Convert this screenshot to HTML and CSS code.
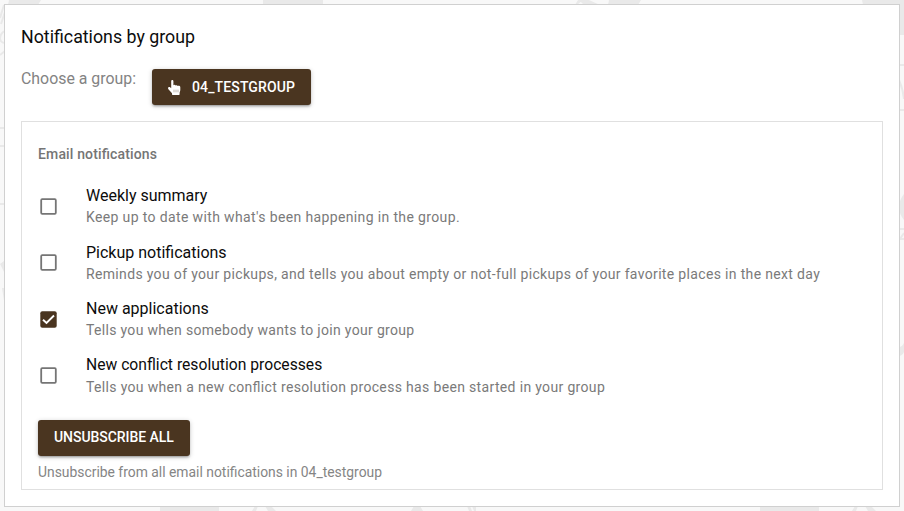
FILE: index.html
```html
<!DOCTYPE html>
<html lang="en">
<head>
<meta charset="utf-8">
<title>Notifications</title>
<link rel="stylesheet" href="styles.css">
</head>
<body>
<svg class="backdrop" width="904" height="511" viewBox="0 0 904 511" aria-hidden="true">
  <g fill="#e9e9e9">
    <path d="M9 0H41L38 5H8ZM263 0H323V5H263ZM578 0H583L577 5H575ZM609 0H641L638 5H608ZM862 0H904V35H899V5H863ZM579 0H589L600 5H584Z"/>
    <path d="M160 506H219V511H160ZM760 506H819V511H760ZM252 511L255 506H258L256 511ZM265 506H271L276 511H268ZM411 511L414 506H420L423 511ZM467 506H470L472 511H469ZM472 506H476V511H474ZM852 511L855 506H858L856 511ZM865 506H871L876 511H868Z"/>
    <path d="M904 194Q899 200 899 207Q899 214 904 220ZM904 343Q902 347 899 347V356Q903 355 904 352ZM0 264L4 261V272ZM2 288H5V307Z"/>
  </g>
  <g fill="none" stroke="#e9e9e9" stroke-width="2">
    <path d="M899 65H904M899 80Q903 89 904 99M899 110H904M899 229H904M904 233L900 239H904M0 128H5M0 146H5M0 204H5M0 18L4 5M1 24L5 12M5 31Q0 33 0 39Q1 43 5 43M0 55L5 51"/>
  </g>
</svg>
<main class="card">
  <h1 class="title">Notifications by group</h1>
  <div class="chooser">
    <span class="chooser-label">Choose a group:</span>
    <button class="btn btn-group">
      <svg class="hand" width="14" height="15" viewBox="0 0 14 14" preserveAspectRatio="none" aria-hidden="true"><path fill="#fff" d="M3.2 1.1C3.2-.3 5.4-.3 5.4 1.1V5C5.8 4.2 7.2 4.3 7.6 5.2C8.2 4.6 9.4 4.8 9.8 5.7C10.5 5.2 12.3 5.5 12.3 6.8V9.2C12.3 10.4 11.6 11.2 11.6 12.4V13.4Q11.6 14 11 14H4.6Q4 14 4 13.4V12.3L.4 8.6C-.6 7.4 .8 6 2.1 6.8L3.2 7.6Z"/><path d="M6 9V11.5M8 9V11.5M10 9V11.5" stroke="#4a3520" stroke-width=".35"/></svg>
      <span>04_TESTGROUP</span>
    </button>
  </div>
  <section class="panel">
    <h2 class="panel-title">Email notifications</h2>
    <ul class="options">
      <li class="option"><svg class="check" viewBox="0 0 17 17" aria-hidden="true"><rect class="box" x="1.2" y="1.2" width="14.6" height="14.6" rx="1"/></svg><div><div class="name">Weekly summary</div><div class="caption caption-wide">Keep up to date with what's been happening in the group.</div></div></li>
      <li class="option"><svg class="check" viewBox="0 0 17 17" aria-hidden="true"><rect class="box" x="1.2" y="1.2" width="14.6" height="14.6" rx="1"/></svg><div><div class="name">Pickup notifications</div><div class="caption">Reminds you of your pickups, and tells you about empty or not-full pickups of your favorite places in the next day</div></div></li>
      <li class="option"><svg class="check" viewBox="0 0 17 17" aria-hidden="true"><rect class="box-on" x=".3" y=".3" width="16.4" height="16.4" rx="2"/><path class="tick" d="M3 8.7L6.5 12L14 4.5"/></svg><div><div class="name">New applications</div><div class="caption caption-narrow">Tells you when somebody wants to join your group</div></div></li>
      <li class="option"><svg class="check" viewBox="0 0 17 17" aria-hidden="true"><rect class="box" x="1.2" y="1.2" width="14.6" height="14.6" rx="1"/></svg><div><div class="name name-long">New conflict resolution processes</div><div class="caption">Tells you when a new conflict resolution process has been started in your group</div></div></li>
    </ul>
    <button class="btn btn-all">UNSUBSCRIBE ALL</button>
    <p class="hint">Unsubscribe from all email notifications in 04_testgroup</p>
  </section>
</main>
</body>
</html>
```
FILE: styles.css
```css
* { box-sizing: border-box; }
body {
  margin: 0;
  padding: 4px;
  height: 511px;
  overflow: hidden;
  background: #f8f8f8;
  color: #0c0c0c;
  font-family: Roboto, sans-serif;
  font-size: 16px;
  font-feature-settings: "liga" 1;
}
.backdrop { position: absolute; left: 0; top: 0; z-index: -1; }
.card {
  width: 896px;
  height: 503px;
  padding: 16px;
  background: #fff;
  border: 1px solid #d0d0d0;
}
.title { margin: 0; font-size: 17.8px; font-weight: 400; line-height: 32px; }
.chooser { display: flex; gap: 16px; margin-top: 16px; height: 36px; }
.chooser-label { width: 115px; font-size: 15.88px; white-space: nowrap; color: #838383; line-height: 19px; }
.btn {
  display: flex;
  align-items: center;
  height: 36px;
  padding: 0 16px;
  border: 0;
  border-radius: 3px;
  background: #4a3520;
  color: #fff;
  font: 500 14px/24px Roboto, sans-serif;
  box-shadow: 0 1px 5px rgba(0,0,0,.2), 0 2px 2px rgba(0,0,0,.14), 0 3px 1px -2px rgba(0,0,0,.12);
}
.btn-group { width: 159px; letter-spacing: .13px; }
.btn-all { width: 152px; padding-bottom: 2px; letter-spacing: -.06px; white-space: nowrap; }
.hand { flex: none; margin-right: 10px; }
.panel {
  margin-top: 16px;
  height: 369px;
  padding: 16px;
  border: 1px solid #e0e0e0;
}
.panel-title { margin: 8px 0 16.6px; font-size: 14px; font-weight: 500; line-height: 16px; letter-spacing: .15px; color: #757575; }
.options { margin: 0 0 15.8px; padding: 0; list-style: none; }
.option { display: flex; align-items: center; height: 56.4px; }
.check { flex: none; width: 17px; height: 17px; margin: 0 29px 1px 2px; }
.box { fill: none; stroke: #757575; stroke-width: 1.8; }
.box-on { fill: #4a3520; }
.tick { fill: none; stroke: #fff; stroke-width: 1.9; }
.name { line-height: 22.2px; }
.name-long { font-size: 15.68px; }
.caption { font-size: 14px; line-height: 21px; letter-spacing: .338px; color: #7a7a7a; }
.caption-wide { letter-spacing: .365px; }
.caption-narrow { letter-spacing: .315px; }
.hint { margin: 7px 0 0; font-size: 13.88px; line-height: 18px; color: #858585; }
```
